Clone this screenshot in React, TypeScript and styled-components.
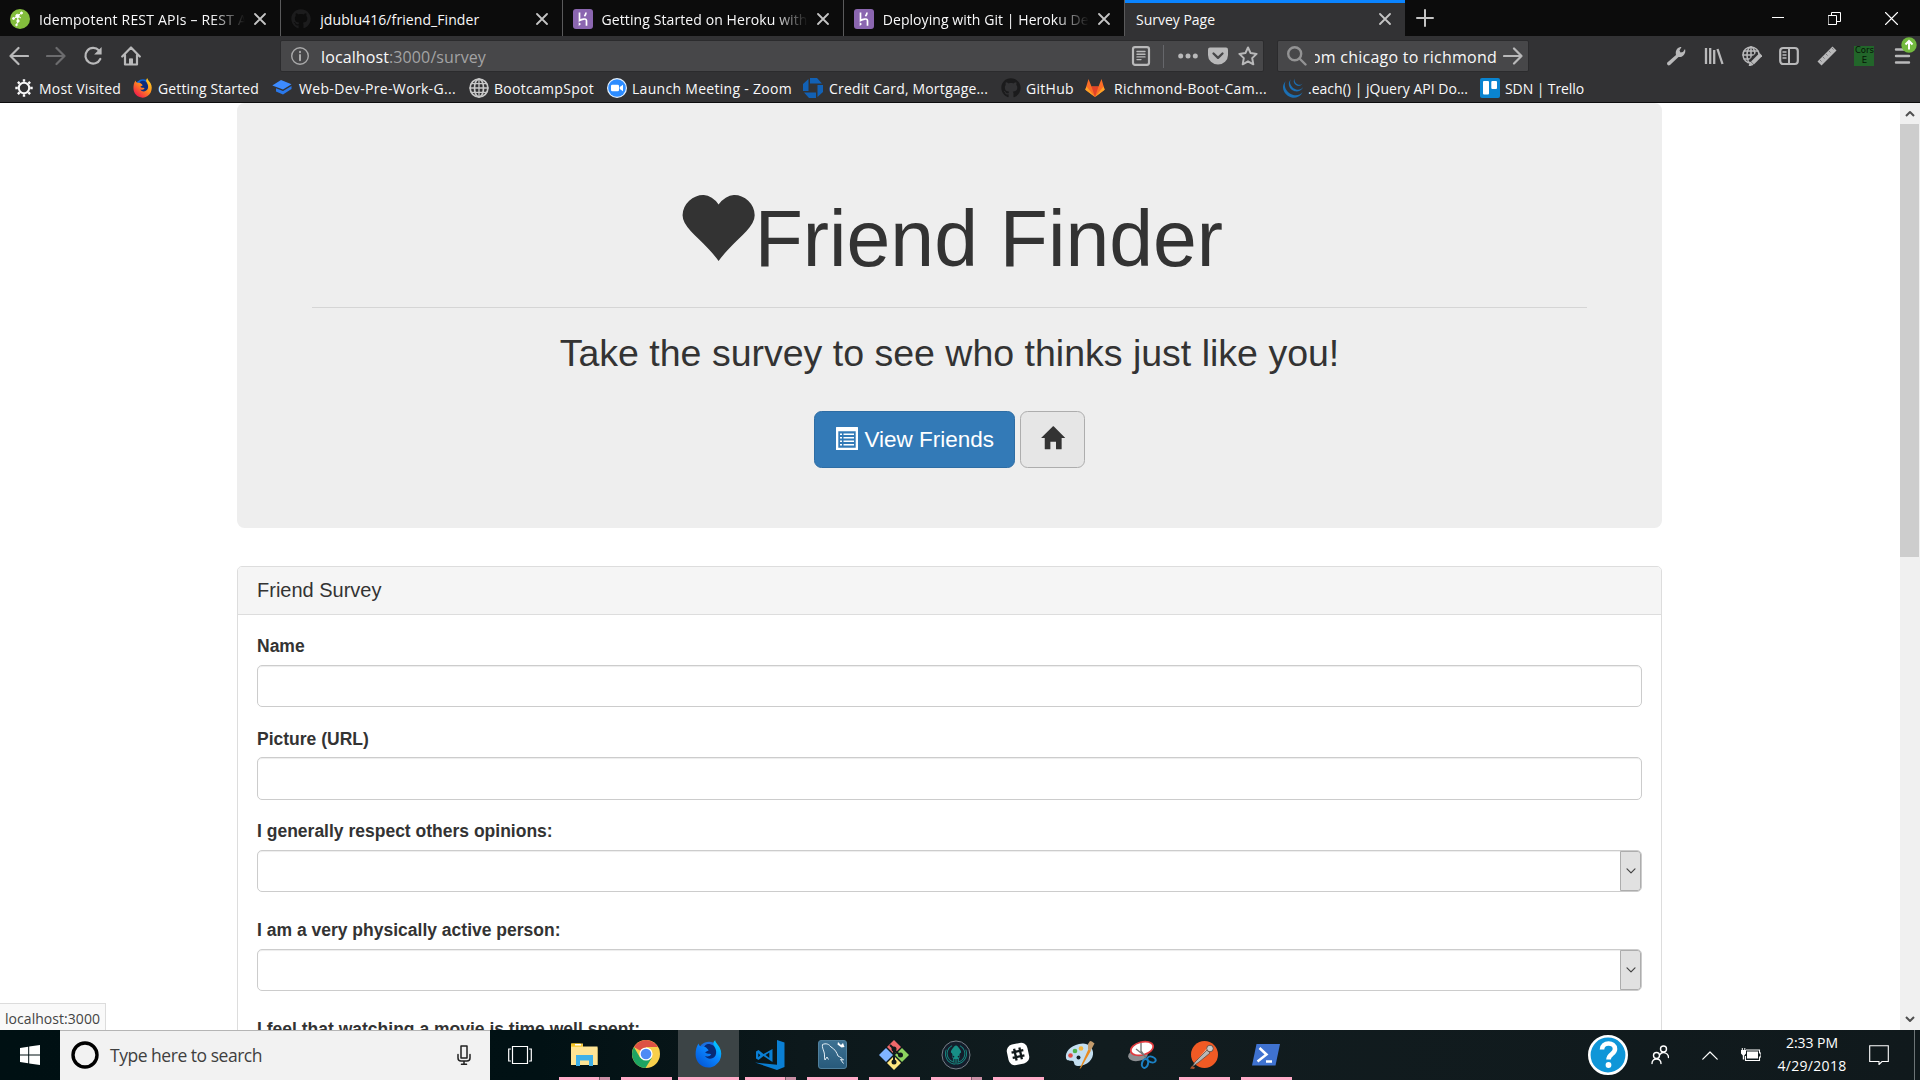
import React, { useLayoutEffect, useRef, useState } from 'react';
import styled, { createGlobalStyle, css } from 'styled-components';
import { FaGithub } from 'react-icons/fa';
import { SiJquery, SiGitkraken } from 'react-icons/si';

const ui = "'Open Sans', 'Noto Sans', sans-serif";
const light = '#f9f9fa';
const glyph = '#b9b9ba';

const Global = createGlobalStyle`
  * { box-sizing: border-box; }
  html, body { margin: 0; padding: 0; overflow: hidden; background: #fff; }
  svg { display: block; flex: none; }
`;

/* ---------- text set to a known measure ---------- */
const FitSpan = styled.span<{ $w: number }>`
  display: block;
  flex: none;
  width: ${(p) => p.$w}px;
  white-space: pre;
`;

function Fit({ w, children }: { w: number; children: React.ReactNode }) {
  const ref = useRef<HTMLSpanElement>(null);
  const [spacing, setSpacing] = useState(0);
  useLayoutEffect(() => {
    const el = ref.current;
    if (!el) return;
    const range = document.createRange();
    range.selectNodeContents(el);
    const count = (el.textContent || '').length;
    setSpacing((w - range.getBoundingClientRect().width) / Math.max(1, count));
  }, [w]);
  return (
    <FitSpan ref={ref} $w={w} style={{ letterSpacing: spacing }}>
      {children}
    </FitSpan>
  );
}

/* ---------- window frame ---------- */
const Screen = styled.div`
  width: 1920px;
  height: 1080px;
  display: flex;
  flex-direction: column;
  overflow: hidden;
  background: #fff;
  font-family: ${ui};
`;

const TabStrip = styled.div`
  height: 36px;
  flex: none;
  display: flex;
  background: #0c0c0c;
  color: ${light};
  font-size: 14px;
  line-height: 20px;
`;

const Tab = styled.div<{ $active?: boolean }>`
  width: ${(p) => (p.$active ? 280 : 281.25)}px;
  flex: none;
  height: 36px;
  display: flex;
  align-items: center;
  padding: 2px 14px 0 ${(p) => (p.$active ? 11 : 10)}px;
  gap: 9px;
  ${(p) =>
    p.$active
      ? css`
          background: #323234;
          box-shadow: inset 0 3px 0 #0a84ff;
        `
      : css`
          border-right: 1px solid #5a5a5b;
        `}
`;

const TabTitle = styled.div<{ $fade?: boolean }>`
  flex: 1;
  min-width: 0;
  overflow: hidden;
  padding-top: 1px;
  ${(p) => p.$fade && css`mask-image: linear-gradient(to left, transparent 0, #000 34px);`}
`;

const NewTab = styled.div`
  width: 40px;
  display: flex;
  align-items: center;
  justify-content: center;
`;

const WindowButtons = styled.div`
  margin-left: auto;
  display: flex;
`;

const WindowButton = styled.div`
  width: 57px;
  display: flex;
  align-items: center;
  justify-content: center;
`;

const NavBar = styled.div`
  height: 42px;
  flex: none;
  display: flex;
  align-items: center;
  background: #323234;
  color: ${glyph};
  padding: 0 10px 2px 9px;
`;

const NavButtons = styled.div`
  width: 271px;
  flex: none;
  display: flex;
  gap: 17.2px;
`;

const Field = styled.div<{ $w: number }>`
  width: ${(p) => p.$w}px;
  height: 32px;
  flex: none;
  display: flex;
  align-items: center;
  background: #474749;
  border: 1px solid #2b2b2d;
  border-radius: 2px;
  font-size: 16px;
  line-height: 24px;
`;

const UrlField = styled(Field)`
  padding: 0 5px 0 9px;
  margin-right: 13px;
`;

const SearchField = styled(Field)`
  padding: 0 4px 0 9px;
`;

const UrlText = styled.div`
  flex: 1;
  margin-left: 11px;
  padding-top: 1px;
  color: #a3a3a4;
  b { font-weight: 400; color: ${light}; }
`;

const UrlTools = styled.div`
  display: flex;
  align-items: center;
  gap: 10px;
`;

const UrlDivider = styled.div`
  width: 1px;
  height: 23px;
  background: #66676b;
  margin: 0 4px 0 2px;
`;

const Query = styled.div`
  width: 182px;
  margin: 0 6px 0 8px;
  padding-top: 1px;
  overflow: hidden;
  display: flex;
  justify-content: flex-end;
  color: ${light};
`;

const ToolButtons = styled.div`
  margin-left: auto;
  display: flex;
  align-items: center;
  gap: 17.6px;
`;

const CorsBadge = styled.div`
  width: 20px;
  height: 20px;
  background: #22662a;
  color: #061306;
  font: 8.5px/9.5px 'DejaVu Sans', sans-serif;
  text-align: center;
  white-space: nowrap;
`;

const MenuButton = styled.div`
  position: relative;
  width: 20px;
  margin-right: -2px;
`;

const UpdateBadge = styled.div`
  position: absolute;
  left: 9px;
  top: -9px;
`;

const BookmarkBar = styled.div`
  height: 25px;
  flex: none;
  display: flex;
  padding-left: 14px;
  background: #323234;
  border-bottom: 1px solid #0c0c0d;
  color: ${light};
  font-size: 14px;
  line-height: 22px;
`;

const Bookmark = styled.div<{ $w: number; $gap: number }>`
  width: ${(p) => p.$w}px;
  flex: none;
  display: flex;
  gap: ${(p) => p.$gap}px;
  height: 22px;
`;

/* ---------- page ---------- */
const Viewport = styled.div`
  position: relative;
  flex: 1;
  min-height: 0;
  display: flex;
  overflow: hidden;
`;

const Page = styled.div`
  flex: 1;
  height: 927px;
  padding-right: 1px;
  overflow: hidden;
  display: flex;
  flex-direction: column;
  align-items: center;
  color: #333;
  font-family: 'Liberation Sans', Arial, sans-serif;
  font-size: 17.5px;
  line-height: 25px;
`;

const Jumbotron = styled.header`
  width: 1425px;
  height: 425px;
  flex: none;
  padding: 93px 75px 0;
  border-radius: 7.5px;
  background: #eee;
  text-align: center;
`;

const Title = styled.h1`
  margin: 0;
  display: flex;
  justify-content: center;
  font-size: 78.75px;
  font-weight: 400;
  line-height: 87px;
`;

const Rule = styled.hr`
  margin: 24px 0 25px;
  border: 0;
  border-top: 1px solid #d5d5d5;
`;

const Lead = styled.h2`
  margin: 0 0 37px;
  font-size: 37.5px;
  font-weight: 400;
  line-height: 41px;
`;

const Actions = styled.div`
  display: flex;
  justify-content: center;
  gap: 5px;
`;

const Button = styled.button<{ $primary?: boolean }>`
  height: 57px;
  display: flex;
  align-items: center;
  padding: 0 20px;
  border: 1px solid ${(p) => (p.$primary ? '#2e6da4' : '#adadad')};
  border-radius: 7.5px;
  background: ${(p) => (p.$primary ? '#337ab7' : '#e6e6e6')};
  color: ${(p) => (p.$primary ? '#fff' : '#333')};
  font: 22.5px/30px 'Liberation Sans', Arial, sans-serif;
  gap: 6px;
`;

const Panel = styled.section`
  width: 1425px;
  height: 620px;
  flex: none;
  margin-top: 38px;
  border: 1px solid #ddd;
  border-radius: 5px;
  overflow: hidden;
`;

const PanelHeading = styled.h3`
  margin: 0;
  height: 48px;
  padding: 12px 19px;
  border-bottom: 1px solid #ddd;
  background: #f5f5f5;
  font-size: 20px;
  font-weight: 400;
  line-height: 22px;
`;

const PanelBody = styled.div`
  padding: 18.5px 19px;
`;

const FormGroup = styled.div<{ $gap?: number }>`
  margin-bottom: ${(p) => p.$gap ?? 18.75}px;
`;

const Label = styled.label`
  display: block;
  margin-bottom: 5.75px;
  padding-top: 0.5px;
  font-weight: 700;
  line-height: 25px;
`;

const Input = styled.div`
  height: 42.5px;
  display: flex;
  justify-content: flex-end;
  border: 1px solid #ccc;
  border-radius: 5px;
  overflow: hidden;
  box-shadow: inset 0 1px 1px rgba(0, 0, 0, 0.075);
`;

const SelectArrow = styled.div`
  width: 21px;
  display: flex;
  align-items: center;
  justify-content: center;
  background: #e1e1e1;
  border: 1px solid #adadad;
  border-radius: 0 3px 3px 0;
`;

const Scrollbar = styled.div`
  width: 20px;
  flex: none;
  display: flex;
  flex-direction: column;
  background: #f0f0f0;
`;

const ScrollButton = styled.div`
  height: 21px;
  display: flex;
  align-items: center;
  justify-content: center;
`;

const Thumb = styled.div`
  height: 433px;
  margin: 0 1px 0 0;
  background: #cdcdcd;
`;

const Grow = styled.div`
  flex: 1;
`;

const LinkStatus = styled.div`
  position: absolute;
  left: 0;
  bottom: 0;
  width: 106px;
  height: 27px;
  padding: 5px 0 0 5px;
  background: #f9f9f9;
  border: solid #dcdcdc;
  border-width: 1px 1px 0 0;
  color: #444;
  font-size: 14px;
  line-height: 20px;
`;

/* ---------- taskbar ---------- */
const Taskbar = styled.footer`
  height: 50px;
  flex: none;
  display: flex;
  background: linear-gradient(90deg, #001013 0, #011114 540px, #0c181b 800px, #111c1f 1100px, #10191c 1920px);
  color: #fff;
`;

const StartButton = styled.div`
  width: 60px;
  display: flex;
  align-items: center;
  justify-content: center;
`;

const SearchBox = styled.div`
  width: 430px;
  display: flex;
  align-items: center;
  padding: 0 16px 1px 11px;
  background: #f2f2f2;
  border-top: 1px solid #b5b5b5;
  color: #3f3f3f;
  font-size: 17.5px;
  line-height: 26px;
`;

const Prompt = styled.div`
  flex: 1;
  margin-left: 11px;
`;

const TaskView = styled.div`
  width: 63px;
  display: flex;
  align-items: center;
  padding-left: 18px;
`;

const TaskSlot = styled.div<{ $active?: boolean }>`
  width: 62px;
  flex: none;
  display: flex;
  flex-direction: column;
  align-items: center;
  justify-content: space-between;
  padding-top: 10px;
  ${(p) => p.$active && css`background: #3c4446; background-clip: content-box; padding: 0 0 0 1px; & > svg { margin-top: 10px; }`}
`;

const Running = styled.div<{ $wide?: boolean; $stack?: boolean }>`
  width: ${(p) => (p.$wide ? 61 : 51)}px;
  height: 3px;
  background: ${(p) => (p.$stack ? 'linear-gradient(90deg, #ffabc8 40px, #7d5c69 40px, #7d5c69 41px, #c98fa5 41px)' : '#ffabc8')};
`;

const Tray = styled.div`
  margin-left: auto;
  display: flex;
  align-items: center;
`;

const TrayItem = styled.div<{ $w: number }>`
  width: ${(p) => p.$w}px;
  display: flex;
  justify-content: center;
`;

const Clock = styled.div`
  width: 82px;
  margin-left: 3px;
  display: flex;
  flex-direction: column;
  align-items: center;
  font-size: 14px;
  line-height: 23px;
  height: 48px;
`;

const ShowDesktop = styled.div`
  width: 6px;
  height: 50px;
  margin-left: 9px;
  border-left: 1px solid #6c7476;
`;

/* ---------- drawings ---------- */
type IconProps = { w?: number; h?: number; vb?: string; color?: string; sw?: number; children: React.ReactNode };
const Line = ({ w = 20, h = w, vb = '0 0 20 20', color = 'currentColor', sw = 2.2, children }: IconProps) => (
  <svg width={w} height={h} viewBox={vb} fill="none" stroke={color} strokeWidth={sw} strokeLinecap="round" strokeLinejoin="round">
    {children}
  </svg>
);
const Solid = ({ w = 20, h = w, vb = '0 0 20 20', color = 'currentColor', children }: IconProps) => (
  <svg width={w} height={h} viewBox={vb} fill={color}>
    {children}
  </svg>
);

const Close = () => (
  <Line w={12} vb="0 0 12 12" color="#c4c4c4" sw={1.8}>
    <path d="M1 1l10 10M11 1L1 11" />
  </Line>
);

const Restlet = () => (
  <Solid>
    <circle cx="10" cy="10" r="10" fill="#83bd3c" />
    <g stroke="#fff" strokeWidth="1" fill="#fff">
      <path d="M4 9.5L7.500 7l4-3M7.500 7l.5 5-1.500 4M7.500 7l3.500 2" fill="none" />
      <circle cx="7.500" cy="7" r="1.700" /><circle cx="11.500" cy="4" r="1" /><circle cx="8" cy="12" r="1.200" /><circle cx="3.500" cy="9.500" r="1" /><circle cx="6.500" cy="16" r=".8" />
    </g>
  </Solid>
);

const Heroku = () => (
  <Solid>
    <rect width="20" height="20" rx="3" fill="#8b66b0" />
    <path d="M6.500 3.500v8c2-1.300 7-2.700 7 .3v5M13 3.500c0 1.600-.7 2.700-1.600 3.700" fill="none" stroke="#fff" strokeWidth="1.700" />
    <path d="M5.700 13.200l2.300 1.900-2.300 1.900z" fill="#fff" />
  </Solid>
);

const Firefox = ({ w = 20, blue = false }: { w?: number; blue?: boolean }) => (
  <Solid w={w} vb="0 0 28 28">
    <defs>
      <linearGradient id={blue ? 'fxb' : 'fxo'} x1="1" y1="0" x2="0.2" y2="1">
        <stop offset="0" stopColor={blue ? '#00e1ff' : '#ffe226'} />
        <stop offset="0.5" stopColor={blue ? '#0a84ff' : '#ff8a1e'} />
        <stop offset="1" stopColor={blue ? '#0356d6' : '#ef1150'} />
      </linearGradient>
    </defs>
    <circle cx="14" cy="12.500" r="10.800" fill={blue ? '#1b6fe0' : '#0a66dd'} />
    <path d="M13 4c4 0 8 2 9 7s-3 9-8 9-8-3-7-7c1-5 3-9 6-9z" fill={blue ? '#082a75' : '#0b2c7c'} />
    <path d="M3.500 3.500C4 5.500 5 6.500 6.500 6.700c2-.5 4 .2 5.500 1.800l1.700 1.700-3.500 2c1.500 2.300 4 .8 6 2-1.200 2.400-4.300 2.600-6.200 1.800 2.700 4 8 3.500 10.500-.5 1.300-3 .7-6-.9-8.500l-1.200-2.500c-.2-2 .5-3.500 1.800-4.200 0 2 2.500 3.700 4.400 7.200 2.200 4 2.200 8.500.2 12.700C22 25 17.500 27.700 13.500 27.500 6 27.300.6 21.500.6 14.400c0-4 .8-7.900 2.900-10.900z" fill={`url(#${blue ? 'fxb' : 'fxo'})`} />
  </Solid>
);

const Chrome = () => (
  <Solid w={28} vb="0 0 28 28">
    <circle cx="14" cy="14" r="14" fill="#f8cf4b" />
    <path d="M14 14L1.900 7A14 14 0 0 1 26.100 7H14z" fill="#dd5144" />
    <path d="M1.900 7A14 14 0 0 0 13.500 28L20 17.500 14 20l-6-2.500z" fill="#1da462" />
    <circle cx="14" cy="14" r="6.600" fill="#fff" />
    <circle cx="14" cy="14" r="5.300" fill="#4e8bf5" />
  </Solid>
);

const Octo = ({ c }: { c: string }) => <FaGithub size={20} color={c} />;

const WebDev = () => (
  <Solid>
    <path d="M9 2l10.500 4.200L11 11.500.3 7.500z" fill="#3d8bff" /><path d="M4 10.300l7 2.700 8.500-5v3L11 16.500l-7-3z" fill="#2a78ea" />
  </Solid>
);

const Gear = () => (
  <Line sw={2}>
    <circle cx="10" cy="10" r="5.200" />
    <path d="M10 1.300v2.500M10 16.200v2.500M1.300 10h2.500M16.200 10h2.500M3.900 3.900l1.700 1.700M14.400 14.400l1.700 1.700M3.900 16.100l1.700-1.700M14.400 5.600l1.700-1.700" strokeWidth="2.400" strokeLinecap="butt" />
  </Line>
);

const Globe = () => (
  <Line sw={1.7} color="#c8c8c8">
    <circle cx="10" cy="10" r="8.900" /><ellipse cx="10" cy="10" rx="4.500" ry="8.900" /><path d="M10 1v18M1 10h18M2.500 5.700h15M2.500 14.300h15" strokeWidth="1.300" />
  </Line>
);

const ZoomLogo = () => (
  <Solid>
    <circle cx="10" cy="10" r="10" fill="#e8f3ff" /><circle cx="10" cy="10" r="8.800" fill="#2d8cff" /><rect x="4" y="6.800" width="8" height="6.500" rx="1.300" fill="#fff" /><path d="M12.700 9l3.300-2.300v6.600L12.700 11z" fill="#fff" />
  </Solid>
);

const Chase = () => (
  <Solid color="#1261b5">
    <path d="M7 0h7l5 5.500H7zM20 7v7l-5.500 5V7zM13 20H6l-5-5.500h12zM0 13V6l5.500-5v12z" />
  </Solid>
);

const Gitlab = () => (
  <Solid>
    <path d="M10 19L.3 11.800 3.500 1l3 7.500h7l3-7.500 3.200 10.800z" fill="#fc6d26" /><path d="M10 19L6.500 8.500h7z" fill="#e24329" /><path d="M.3 11.800L10 19 1.500 8.600zM19.700 11.800L10 19l8.500-10.400z" fill="#fca326" />
  </Solid>
);

const Trello = () => (
  <Solid>
    <rect width="20" height="20" rx="2" fill="#0a84d0" /><rect x="3" y="3" width="6" height="13.500" rx="1" fill="#fff" /><rect x="11.300" y="3" width="5.700" height="8" rx="1" fill="#fff" />
  </Solid>
);

const Heart = () => (
  <Solid w={78.75} h={78.75} vb="0 -1200 1200 1200">
    <path transform="scale(1 -1)" d="M649 949q48 68 109.500 104t121.500 38.500t118.500 -20t102.500 -64t71 -100.500t27 -123q0 -57 -33.500 -117.500t-94 -124.500t-126.500 -127.500t-150 -152.500t-146 -174q-62 85 -145.500 174t-150 152.500t-126.500 127.500t-93.500 124.500t-33.500 117.500q0 64 28 123t73 100.500t104 64t119 20t120.500 -38.500t104.500 -104z" />
  </Solid>
);

const House = () => (
  <Solid w={24.4} h={23.5} vb="0 -1240 1300 1250">
    <path transform="scale(1 -1)" d="M18 618l620 608q8 7 18.500 7t17.500 -7l608 -608q8 -8 5.500 -13t-12.500 -5h-175v-575q0 -10 -7.500 -17.500t-17.500 -7.500h-250q-10 0 -17.500 7.500t-7.500 17.500v375h-300v-375q0 -10 -7.500 -17.500t-17.500 -7.500h-250q-10 0 -17.500 7.500t-7.500 17.500v575h-175q-10 0 -12.500 5t5.500 13z" />
  </Solid>
);

const ListAlt = () => (
  <Solid w={22} h={23} vb="0 0 22 23">
    <path fillRule="evenodd" d="M.5 0h21q.5 0 .5.500v22q0 .5-.5.500H.5q-.5 0-.5-.5V.5Q0 0 .5 0zM2.300 4.300v16.400h17.400V4.300z" />
    <path d="M4 6.500h2v1.600H4zM7.500 6.500h10.500v1.600H7.500zM4 10h2v1.600H4zM7.500 10h10.500v1.600H7.500zM4 13.500h2v1.600H4zM7.500 13.500h10.500v1.600H7.500zM4 17h2v1.600H4zM7.500 17h10.500v1.600H7.500z" />
  </Solid>
);

const HeartBox = styled.span`
  margin-top: -8px;
  height: 79px;
`;

const HomeBox = styled.span`
  margin: -3px -2px 0 0;
`;

const ListBox = styled.span`
  margin: -3px 0 0 1px;
`;

const bookmarks = [
  { name: 'Most Visited', icon: <Gear />, slot: 119, gap: 5, w: 82 },
  { name: 'Getting Started', icon: <Firefox />, slot: 139, gap: 5, w: 101 },
  { name: 'Web-Dev-Pre-Work-G...', icon: <WebDev />, slot: 197, gap: 7, w: 157 },
  { name: 'BootcampSpot', icon: <Globe />, slot: 138, gap: 5, w: 100 },
  { name: 'Launch Meeting - Zoom', icon: <ZoomLogo />, slot: 196, gap: 5, w: 160 },
  { name: 'Credit Card, Mortgage...', icon: <Chase />, slot: 198, gap: 6, w: 159 },
  { name: 'GitHub', icon: <Octo c="#1b1b1c" />, slot: 84, gap: 5, w: 48 },
  { name: 'Richmond-Boot-Cam...', icon: <Gitlab />, slot: 198, gap: 9, w: 153 },
  { name: '.each() | jQuery API Do...', icon: <SiJquery size={20} color="#1b6fb3" />, slot: 197, gap: 5, w: 160 },
  { name: 'SDN | Trello', icon: <Trello />, slot: 110, gap: 5, w: 79 },
];

const tabs = [
  { name: 'Idempotent REST APIs – REST A', icon: <Restlet />, w: 208, fade: true },
  { name: 'jdublu416/friend_Finder', icon: <Octo c="#1c1c1d" />, w: 159, fade: false },
  { name: 'Getting Started on Heroku with', icon: <Heroku />, w: 206, fade: true },
  { name: 'Deploying with Git | Heroku De', icon: <Heroku />, w: 206, fade: true },
];

const apps: { icon: React.ReactNode; run?: 'one' | 'many'; active?: boolean }[] = [
  {
    run: 'many',
    icon: (
      <Solid w={30} vb="0 0 30 30">
        <path d="M2 3.500h12v4h14.500V25H2z" fill="#f2c94c" /><path d="M2 6.500h26.500V25H2z" fill="#ffe494" /><path d="M2.500 3.500h9l2 3h-11z" fill="#f7c723" /><path d="M6 4h6v1.500H6z" fill="#fff" />
        <path d="M7 26V15h17v11h-4v-5.500h-9V26z" fill="#3fb0e8" />
      </Solid>
    ),
  },
  { run: 'one', icon: <Chrome /> },
  { run: 'one', active: true, icon: <Firefox w={28} blue /> },
  {
    run: 'many',
    icon: (
      <Solid w={30} vb="0 0 30 30" color="#0a7fd4">
        <path d="M22 0l7.500 2.500V27L22 30 0 22.500l22 2.300z" /><path fillRule="evenodd" d="M17.500 9v13L8.500 16l-5 4L1 18.500v-7L3.500 10l5 4zM14.300 12.500L10.500 15l3.800 3zM3.300 13.200v4l2-2z" />
      </Solid>
    ),
  },
  {
    run: 'one',
    icon: (
      <Solid w={29} vb="0 0 29 29">
        <defs><linearGradient id="sql" x2="0" y2="1"><stop stopColor="#3d7192" /><stop offset="1" stopColor="#285a7b" /></linearGradient></defs>
        <rect x=".5" y=".5" width="28" height="28" rx="2.500" fill="url(#sql)" stroke="#4f7f9c" />
        <path d="M7 20c-1-3 0-5-1-8-1-3-2-5-1.500-7.500C8 3 11 4 13 7c4 2 6 6 7 9 2 1 4 2 5.500 4l-3-.5 3 4M7 20l2-3 1.500 2.500" fill="none" stroke="#e3eef5" strokeWidth="1" />
        <path d="M20 2l3 3 2-2 1.500 4-3 .5-4-3z" fill="#fff" />
      </Solid>
    ),
  },
  {
    run: 'one',
    icon: (
      <Solid w={30} vb="0 0 30 30">
        <path d="M15 0l7 7-7 7-7-7z" fill="#f0686b" /><path d="M7 8l7 7-7 7-7-7z" fill="#80b3ff" /><path d="M23 8l7 7-7 7-7-7z" fill="#8dd35f" /><path d="M15 16l7 7-7 7-7-7z" fill="#ffe680" />
        <path d="M11 5l4 4v13M15 10l6 5" fill="none" stroke="#12191b" strokeWidth="2" /><circle cx="15" cy="9" r="2.500" fill="#12191b" /><circle cx="15" cy="22" r="2.500" fill="#12191b" /><circle cx="21.500" cy="15" r="2.500" fill="#12191b" />
      </Solid>
    ),
  },
  {
    run: 'many',
    icon: (
      <Solid w={30} vb="0 0 30 30">
        <circle cx="15" cy="15" r="14" fill="#141d2b" stroke="#777e86" strokeWidth="1" />
        <g transform="translate(4 4)"><SiGitkraken size={22} color="#178f86" /></g>
      </Solid>
    ),
  },
  {
    run: 'one',
    icon: (
      <Solid w={28} vb="0 0 28 28">
        <g transform="rotate(-12 14 14)"><rect x="3.500" y="3.500" width="21" height="21" rx="6.500" fill="#fff" /><path d="M11.300 8v12M16.700 8v12M8 11.300h12M8 16.700h12" stroke="#10181a" strokeWidth="2.300" /></g>
      </Solid>
    ),
  },
  {
    icon: (
      <Solid w={30} vb="0 0 30 30">
        <path d="M14 4C5 6 0 12 1 18c1 4 5 2 7 3s0 5 5 5c9 0 16-7 15-14-1-6-6-10-14-8z" fill="#c3def0" />
        <circle cx="13.500" cy="17.500" r="2" fill="#142024" /><circle cx="5.500" cy="15.500" r="2.300" fill="#e04d45" /><circle cx="10" cy="11" r="2.300" fill="#50b24a" /><circle cx="16" cy="8.500" r="2.300" fill="#f5b53c" />
        <path d="M14.500 29l9-20 2.500 1.500L16 28z" fill="#e88a1e" /><path d="M23 9V4l2-3 2 .5 2.500 2-4 7.500z" fill="#c39b6c" />
      </Solid>
    ),
  },
  {
    icon: (
      <Solid w={30} vb="0 0 30 30">
        <ellipse cx="11" cy="15" rx="10" ry="6" fill="#8d8f92" transform="rotate(-12 11 15)" /><ellipse cx="15" cy="8.500" rx="11.500" ry="6.500" fill="#fff" stroke="#e03a3e" strokeWidth="1.700" transform="rotate(-15 15 8.500)" />
        <path d="M14 3v8l5 7M9 9l9 7" stroke="#777" strokeWidth="1.400" fill="none" /><ellipse cx="18" cy="23.500" rx="3" ry="4.500" fill="none" stroke="#1b81c5" strokeWidth="2" transform="rotate(15 18 23.500)" /><ellipse cx="24.500" cy="19.500" rx="4.300" ry="2.800" fill="none" stroke="#1b81c5" strokeWidth="2" transform="rotate(20 24.500 19.500)" />
      </Solid>
    ),
  },
  {
    run: 'one',
    icon: (
      <Solid w={30} vb="0 0 30 30">
        <circle cx="15.500" cy="14.500" r="13.500" fill="#f15a24" /><path d="M9 19L18 8l2 2-8 10z" fill="#ffb08c" /><path d="M3 27l3-5 12-12 3 3-11 9z" fill="#b7b7b7" stroke="#54453c" strokeWidth=".7" /><circle cx="21" cy="8.500" r="3.300" fill="#c9c9c9" stroke="#54453c" strokeWidth=".8" /><path d="M1 28.500l2-2.500 3 1.500-1 1.500z" fill="#a9512e" />
      </Solid>
    ),
  },
  {
    run: 'one',
    icon: (
      <Solid w={30} vb="0 0 30 30">
        <path d="M5.500 4H29l-4.500 21.500H1z" fill="#3f72d0" /><path d="M8.500 8l7 6.500-9 7M15 21.500h6" fill="none" stroke="#fff" strokeWidth="2.500" />
      </Solid>
    ),
  },
];

export default function App() {
  return (
    <Screen>
      <Global />
      <TabStrip>
        {tabs.map((t) => (
          <Tab key={t.name}>
            {t.icon}
            <TabTitle $fade={t.fade}><Fit w={t.w}>{t.name}</Fit></TabTitle>
            <Close />
          </Tab>
        ))}
        <Tab $active>
          <TabTitle><Fit w={79}>Survey Page</Fit></TabTitle>
          <Close />
        </Tab>
        <NewTab>
          <Line w={18} vb="0 0 18 18" color="#c4c4c4" sw={2}><path d="M1 9h16M9 1v16" /></Line>
        </NewTab>
        <WindowButtons>
          <WindowButton><Line w={12} vb="0 0 12 12" color="#fff" sw={1}><path d="M0 5.500h12" /></Line></WindowButton>
          <WindowButton><Line w={13} vb="0 0 13 13" color="#fff" sw={1}><path d="M.5 3.500h8v9h-8zM3.500 3.500v-3h9v9h-4" strokeLinejoin="miter" /></Line></WindowButton>
          <WindowButton><Line w={13} vb="0 0 13 13" color="#fff" sw={1.1}><path d="M.5.5l12 12M12.500.5l-12 12" /></Line></WindowButton>
        </WindowButtons>
      </TabStrip>

      <NavBar>
        <NavButtons>
          <Line><path d="M19 10H1.500M9.500 2l-8 8 8 8" /></Line>
          <Line color="#6c6c6e"><path d="M1 10h17.500M10.500 2l8 8-8 8" /></Line>
          <Line><path d="M17.300 13A7.800 7.800 0 1 1 16 4.500" /><path d="M18.600 1v7.500h-7.500z" fill="currentColor" stroke="none" /></Line>
          <Line><path d="M1.200 10.500L10 1.500l8.800 9M4 9v9.500h12V9M10 13.500v5" /><path d="M8 12.500h4v6H8z" fill="currentColor" stroke="none" /></Line>
        </NavButtons>
        <UrlField $w={984}>
          <Line sw={1.4} color="#a9a9aa"><circle cx="10" cy="10" r="8.300" /><path d="M10 9v5.200M10 5.800v.4" strokeWidth="2" /></Line>
          <UrlText><Fit w={165}><b>localhost</b>:3000/survey</Fit></UrlText>
          <UrlTools>
            <Line><rect x="2" y="1.200" width="16" height="17.600" rx="2" /><path d="M6 5.500h8M6 8.200h8M6 10.900h8M6 13.600h4" strokeWidth="1.400" /></Line>
            <UrlDivider />
            <Solid><circle cx="2.700" cy="10" r="2.500" /><circle cx="10" cy="10" r="2.500" /><circle cx="17.300" cy="10" r="2.500" /></Solid>
            <Solid><path d="M2 1.500h16q2 0 2 2V9a10 9.500 0 0 1-20 0V3.500q0-2 2-2z" /><path d="M5.500 7.500l4.500 4.300 4.500-4.300" fill="none" stroke="#474749" strokeWidth="2.300" strokeLinecap="round" strokeLinejoin="round" /></Solid>
            <Line sw={2}><path d="M10 1.500l2.600 5.600 6 .8-4.400 4.200 1.100 6.200L10 15.300l-5.300 3 1.100-6.200L1.400 7.900l6-.8z" /></Line>
          </UrlTools>
        </UrlField>
        <SearchField $w={252}>
          <Line color="#939394" sw={2.4}><circle cx="7.700" cy="7.700" r="6.500" /><path d="M12.500 12.500l6 6" /></Line>
          <Query><Fit w={186}>om chicago to richmond</Fit></Query>
          <Line><path d="M1 10h17.500M11 2.500l7.500 7.500-7.500 7.500" /></Line>
        </SearchField>
        <ToolButtons>
          <Solid><path d="M1.300 16.500L10 9C9 5 11 1 15.500 1l-2 3.500 1 2 2.500-.5 2-3c1.300 4-1.800 8.500-6.500 8L4 19q-1.500 1-2.500-.3-.8-1.200-.2-2.200z" /></Solid>
          <Line sw={2.3}><path d="M2 2v16M6.200 2v16M10.200 4v14M13.500 3l5 15" strokeLinecap="butt" /></Line>
          <Line sw={1.5}><circle cx="9" cy="9" r="8" /><ellipse cx="9" cy="9" rx="4" ry="8" /><path d="M1 9h16M2 5h14M2 13h12M9 1v16" /><path d="M9 17l8-8" stroke="#323234" strokeWidth="7" strokeLinecap="butt" /><path d="M10.500 17L19 8.500" strokeWidth="4" strokeLinecap="butt" /><path d="M7.500 19.500l1-3 2 2z" fill="currentColor" /></Line>
          <Line><rect x="1.200" y="2" width="17.600" height="16" rx="3" /><path d="M10 2v16" strokeWidth="2" /><path d="M4 6h3M4 9h3M4 12h3" strokeWidth="1.400" /></Line>
          <Line sw={5.6}><path d="M2.500 17.500L17.500 2.500" strokeLinecap="butt" /><path d="M3 14l1.600 1.600M6 11l1.600 1.600M9 8l1.600 1.600M12 5l1.600 1.600M15 2l1.600 1.600" stroke="#77777a" strokeWidth="1" strokeLinecap="butt" /></Line>
          <CorsBadge>Cors<br />E</CorsBadge>
          <MenuButton>
            <Line sw={2.4}><path d="M4 3.500h13M4 10h13M4 16.500h13" /></Line>
            <UpdateBadge>
              <Solid w={16} vb="0 0 16 16"><circle cx="8" cy="8" r="7.700" fill="#73ba3f" /><path d="M8 12.500V4.500M4.500 7.500L8 4l3.500 3.500" fill="none" stroke="#fff" strokeWidth="2" /></Solid>
            </UpdateBadge>
          </MenuButton>
        </ToolButtons>
      </NavBar>

      <BookmarkBar>
        {bookmarks.map((b) => (
          <Bookmark key={b.name} $w={b.slot} $gap={b.gap}>
            {b.icon}
            <Fit w={b.w}>{b.name}</Fit>
          </Bookmark>
        ))}
      </BookmarkBar>

      <Viewport>
        <Page>
          <Jumbotron>
            <Title><HeartBox><Heart /></HeartBox>Friend Finder</Title>
            <Rule />
            <Lead>Take the survey to see who thinks just like you!</Lead>
            <Actions>
              <Button $primary><ListBox><ListAlt /></ListBox>View Friends</Button>
              <Button><HomeBox><House /></HomeBox></Button>
            </Actions>
          </Jumbotron>
          <Panel>
            <PanelHeading>Friend Survey</PanelHeading>
            <PanelBody>
              <FormGroup><Label>Name</Label><Input /></FormGroup>
              <FormGroup><Label>Picture (URL)</Label><Input /></FormGroup>
              {['I generally respect others opinions:', 'I am a very physically active person:', 'I feel that watching a movie is time well spent:'].map((q) => (
                <FormGroup key={q} $gap={25}>
                  <Label>{q}</Label>
                  <Input>
                    <SelectArrow><Line w={10} h={6} vb="0 0 10 6" color="#444" sw={1.2}><path d="M1 .8l4 4 4-4" /></Line></SelectArrow>
                  </Input>
                </FormGroup>
              ))}
            </PanelBody>
          </Panel>
        </Page>
        <Scrollbar>
          <ScrollButton><Line w={10} h={7} vb="0 0 10 7" color="#505050" sw={2}><path d="M1 6l4-4 4 4" strokeLinecap="butt" /></Line></ScrollButton>
          <Thumb />
          <Grow />
          <ScrollButton><Line w={10} h={7} vb="0 0 10 7" color="#505050" sw={2}><path d="M1 1l4 4 4-4" strokeLinecap="butt" /></Line></ScrollButton>
        </Scrollbar>
        <LinkStatus><Fit w={95}>localhost:3000</Fit></LinkStatus>
      </Viewport>

      <Taskbar>
        <StartButton>
          <Solid color="#fff"><path d="M0 2.900L8.200 1.700v7.700H0zM9.200 1.500L20 0v9.400H9.200zM0 10.400h8.200v7.800L0 17zM9.200 10.400H20V20L9.200 18.400z" /></Solid>
        </StartButton>
        <SearchBox>
          <Line w={28} vb="0 0 28 28" color="#000" sw={3.4}><circle cx="14" cy="14" r="12" /></Line>
          <Prompt><Fit w={152}>Type here to search</Fit></Prompt>
          <Line w={20} color="#222" sw={1.5}><path d="M7 1h6v12H7zM4 9.500V13q0 3 3 3h6q3 0 3-3V9.500M10 16v3.300M7.500 19.300h5" /></Line>
        </SearchBox>
        <TaskView>
          <Line w={24} vb="0 0 24 20" h={20} color="#fff" sw={1.2}><path d="M4.500 1.500h15v17h-15zM2.500 4H.7v12h1.800M21.500 4h1.800v12h-1.800" strokeLinejoin="miter" /></Line>
        </TaskView>
        {apps.map((a, i) => (
          <TaskSlot key={i} $active={a.active}>
            {a.icon}
            {a.run && <Running $wide={a.active} $stack={a.run === 'many'} />}
          </TaskSlot>
        ))}
        <Tray>
          <TrayItem $w={52}>
            <Solid w={40} vb="0 0 40 40">
              <circle cx="20" cy="20" r="18.700" fill="#0f96d8" stroke="#fff" strokeWidth="2.600" />
              <path d="M14 14.500c0-8 13-8 13-.5 0 5-6.500 5-6.500 10.500" fill="none" stroke="#fff" strokeWidth="4.600" /><circle cx="20.500" cy="30" r="2.900" fill="#fff" />
            </Solid>
          </TrayItem>
          <TrayItem $w={52}>
            <Line w={18} h={20} vb="0 0 18 20" color="#fff" sw={1.4}><circle cx="12.500" cy="4" r="3" /><circle cx="5.500" cy="10.500" r="3" /><path d="M1 18.500c0-6 9-6 9 0M9 9.500c2-3.500 8.500-2 8.500 3" /></Line>
          </TrayItem>
          <TrayItem $w={48}>
            <Line w={16} h={9} vb="0 0 16 9" color="#fff" sw={1.2}><path d="M.8 8.200L8 1l7.200 7.200" /></Line>
          </TrayItem>
          <TrayItem $w={34}>
            <Solid w={20} h={14} vb="0 0 20 14" color="#fff"><path d="M6 3.500h11v7H6z" /><path d="M5 2h13.500v3H20v4h-1.500v3.500h-14V8" fill="none" stroke="#fff" strokeWidth="1.100" /><path d="M0 2h5v3.500L3.200 7.500v4H1.800v-4L0 5.500zM.8 0h1v2h-1zM3.300 0h1v2h-1z" /></Solid>
          </TrayItem>
          <Clock>
            <Fit w={52}>2:33 PM</Fit>
            <Fit w={69}>4/29/2018</Fit>
          </Clock>
          <TrayItem $w={52}>
            <Line w={20} vb="0 0 20 20" color="#fff" sw={1.1}><path d="M.7.7h18.600v15.800H13l-3 3v-3H.7z" strokeLinejoin="miter" /></Line>
          </TrayItem>
          <ShowDesktop />
        </Tray>
      </Taskbar>
    </Screen>
  );
}
